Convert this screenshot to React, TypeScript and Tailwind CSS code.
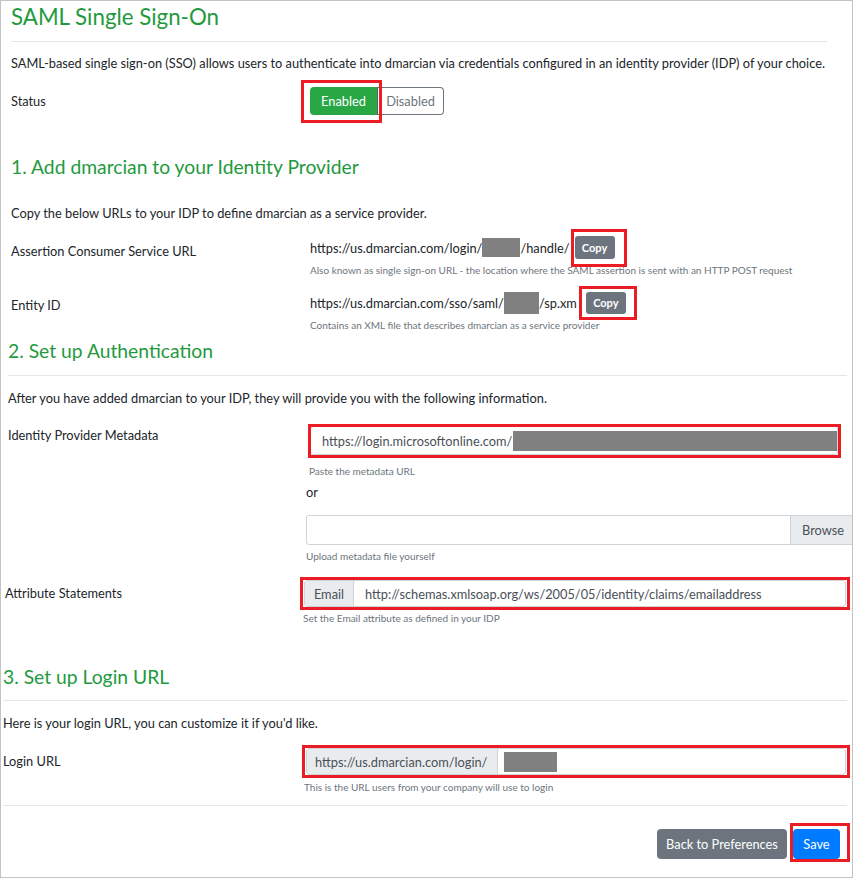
import React from "react";

function Mark({ className }: { className: string }) {
  // red annotation frame drawn over a control
  return <span className={"pointer-events-none absolute border-[3px] border-[#ec1c24] " + className} />;
}

function Help({ children, className = "" }: { children: React.ReactNode; className?: string }) {
  return <div className={"text-[10px] leading-[12px] text-[#6c757d] " + className}>{children}</div>;
}

function Redact({ className }: { className: string }) {
  return <span className={"inline-block bg-[#808080] " + className} />;
}

export default function App() {
  const heading = "text-[#1f9a3e] leading-none flex items-center";
  return (
    <div className="w-[853px] h-[878px] overflow-hidden bg-white border border-[#c3c3c3] text-[#212529] text-[12.8px] leading-[18px] font-['Lato','Open_Sans',sans-serif]">
      {/* intro */}
      <div className="pl-[10px]">
        <h1 className={heading + " h-[32px] text-[22.3px]"}>SAML Single Sign-On</h1>
        <div className="mt-[8px] h-px bg-[#e6e6e6] mr-[25px]" />
        <p className="h-[42px] flex items-center">
          SAML-based single sign-on (SSO) allows users to authenticate into dmarcian via credentials configured in an identity provider (IDP) of your choice.
        </p>
        <div className="h-[34px] flex items-center">
          <div className="w-[299px] shrink-0">Status</div>
          <div className="relative flex">
            <Mark className="left-[-9px] top-[-7px] w-[81px] h-[43px]" />
            <button className="h-[28px] w-[68px] bg-[#28a745] text-white rounded-l-[4px] border-r border-[#5a6268]">Enabled</button>
            <button className="h-[28px] w-[66px] border border-l-0 border-[#6c757d] text-[#6c757d] rounded-r-[4px]">Disabled</button>
          </div>
        </div>

        {/* section 1 */}
        <h2 className={heading + " mt-[30px] h-[38px] text-[19.3px]"}>1. Add dmarcian to your Identity Provider</h2>
        <p className="h-[50px] pt-[4px] flex items-center">Copy the below URLs to your IDP to define dmarcian as a service provider.</p>

        <div className="flex">
          <div className="w-[299px] shrink-0 pt-[6px]">Assertion Consumer Service URL</div>
          <div>
            <div className="flex items-center h-[23px]">
              <span>https://us.dmarcian.com/login/</span>
              <Redact className="w-[38px] h-[19px]" />
              <span>/handle/</span>
              <div className="relative ml-[5px]">
                <Mark className="left-[-4px] top-[-7px] w-[56px] h-[38px]" />
                <button className="h-[23px] w-[40px] rounded-[3px] bg-[#6c757d] text-white text-[11px] font-bold">Copy</button>
              </div>
            </div>
            <Help className="mt-[5px]">Also known as single sign-on URL - the location where the SAML assertion is sent with an HTTP POST request</Help>
          </div>
        </div>

        <div className="flex mt-[16px]">
          <div className="w-[299px] shrink-0 pt-[4px]">Entity ID</div>
          <div>
            <div className="flex items-center h-[22px]">
              <span>https://us.dmarcian.com/sso/saml/</span>
              <Redact className="w-[35px] h-[22px]" />
              <span>/sp.xm</span>
              <div className="relative ml-[9px]">
                <Mark className="left-[-7px] top-[-6px] w-[58px] h-[34px]" />
                <button className="h-[22px] w-[40px] rounded-[3px] bg-[#6c757d] text-white text-[11px] font-bold">Copy</button>
              </div>
            </div>
            <Help className="mt-[5px]">Contains an XML file that describes dmarcian as a service provider</Help>
          </div>
        </div>
      </div>

      {/* section 2 */}
      <div className="pl-[7px]">
        <h2 className={heading + " mt-[5px] h-[30px] text-[19.3px]"}>2. Set up Authentication</h2>
        <div className="mt-[9px] h-px bg-[#e6e6e6] mr-[5px]" />
        <p className="h-[44px] flex items-center">After you have added dmarcian to your IDP, they will provide you with the following information.</p>

        <div className="flex mt-[6px]">
          <div className="w-[302px] shrink-0">Identity Provider Metadata</div>
          <div>
            <div className="relative">
              <Mark className="left-[-2px] top-[-2px] w-[533px] h-[34px]" />
              <div className="w-[528px] h-[29px] border border-[#ced4da] rounded-[3px] pl-[11px] flex items-center text-[#495057]">
                <span>https://login.microsoftonline.com/</span>
                <Redact className="ml-[1px] w-[326px] h-[20px]" />
              </div>
            </div>
            <Help className="mt-[10px] -ml-[1px]">Paste the metadata URL</Help>
            <div className="mt-[7px] -ml-[4px] leading-[16px]">or</div>
            <div className="mt-[15px] -ml-[4px] w-[550px] h-[30px] flex border border-[#ced4da] rounded-l-[3px]">
              <div className="flex-1" />
              <div className="w-[65px] bg-[#e9ecef] border-l border-[#ced4da] flex items-center pl-[11px] text-[#495057]">Browse</div>
            </div>
            <Help className="mt-[5px] -ml-[4px]">Upload metadata file yourself</Help>
          </div>
        </div>

        <div className="flex mt-[18px] -ml-[3px]">
          <div className="w-[299px] shrink-0 pt-[4px]">Attribute Statements</div>
          <div>
            <div className="relative">
              <Mark className="left-[-4px] top-[-3px] w-[550px] h-[33px]" />
              <div className="w-[542px] h-[27px] flex border border-[#ced4da] rounded-[3px] text-[#495057]">
                <div className="w-[49px] bg-[#e9ecef] border-r border-[#ced4da] flex items-center justify-center">Email</div>
                <div className="flex items-center pl-[11px]">http://schemas.xmlsoap.org/ws/2005/05/identity/claims/emailaddress</div>
              </div>
            </div>
            <Help className="mt-[5px] -ml-[1px]">Set the Email attribute as defined in your IDP</Help>
          </div>
        </div>
      </div>

      {/* section 3 */}
      <div className="pl-[2px]">
        <h2 className={heading + " mt-[38px] h-[30px] text-[19.3px]"}>3. Set up Login URL</h2>
        <div className="mt-[8px] h-px bg-[#e6e6e6] mr-[5px]" />
        <p className="h-[44px] flex items-center">Here is your login URL, you can customize it if you'd like.</p>

        <div className="flex mt-[3px]">
          <div className="w-[303px] shrink-0 pt-[4px]">Login URL</div>
          <div>
            <div className="relative">
              <Mark className="left-[-4px] top-[-3px] w-[548px] h-[33px]" />
              <div className="w-[540px] h-[27px] flex border border-[#ced4da] rounded-[3px]">
                <div className="w-[191px] bg-[#e9ecef] border-r border-[#ced4da] flex items-center pl-[8px] text-[#495057]">https://us.dmarcian.com/login/</div>
                <div className="flex items-center pl-[6px]">
                  <Redact className="w-[53px] h-[20px]" />
                </div>
              </div>
            </div>
            <Help className="mt-[6px] -ml-[2px]">This is the URL users from your company will use to login</Help>
          </div>
        </div>

        <div className="mt-[12px] h-px bg-[#e6e6e6] mr-[5px]" />

        <div className="mt-[23px] flex justify-end gap-[6px] pr-[10px]">
          <button className="h-[30px] w-[130px] rounded-[4px] bg-[#6c757d] text-white">Back to Preferences</button>
          <div className="relative mr-[2px]">
            <Mark className="left-[-3px] top-[-6px] w-[60px] h-[39px]" />
            <button className="h-[30px] w-[47px] rounded-[4px] bg-[#007bff] text-white">Save</button>
          </div>
        </div>
      </div>
    </div>
  );
}
